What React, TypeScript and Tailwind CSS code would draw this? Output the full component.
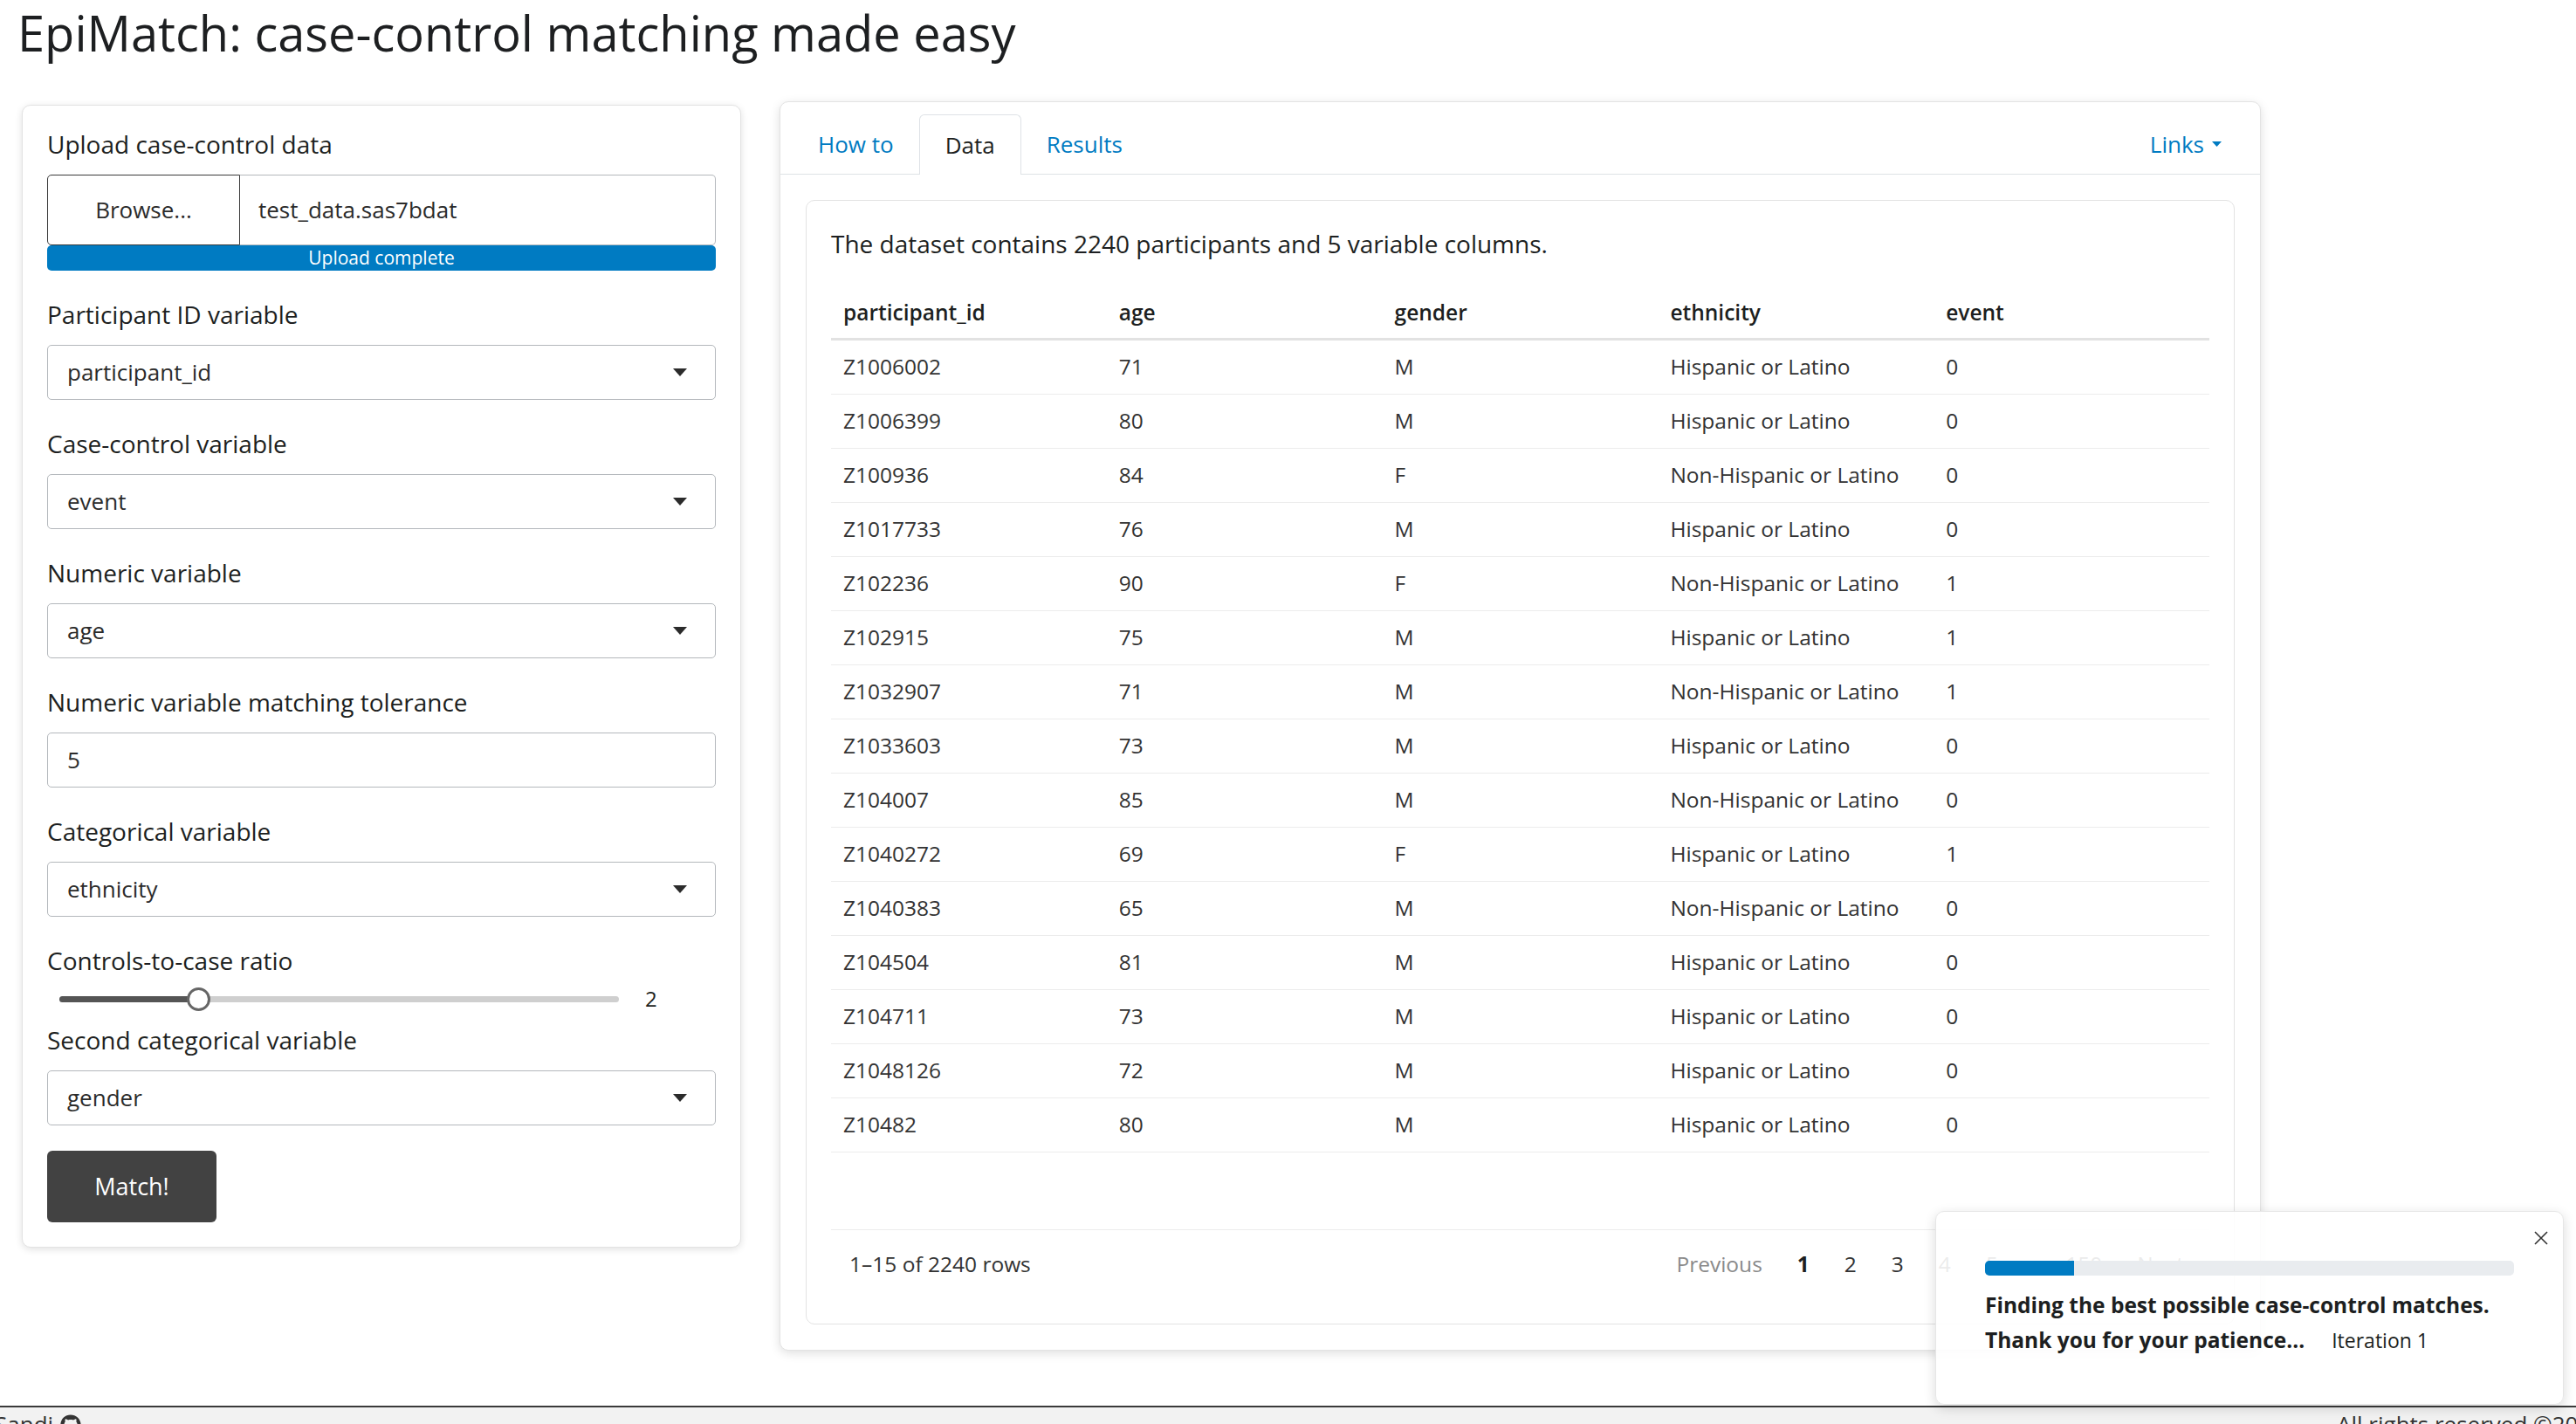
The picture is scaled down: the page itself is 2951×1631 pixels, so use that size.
import { FaGithub } from 'react-icons/fa';

const rows: string[][] = [
  ['Z1006002', '71', 'M', 'Hispanic or Latino', '0'],
  ['Z1006399', '80', 'M', 'Hispanic or Latino', '0'],
  ['Z100936', '84', 'F', 'Non-Hispanic or Latino', '0'],
  ['Z1017733', '76', 'M', 'Hispanic or Latino', '0'],
  ['Z102236', '90', 'F', 'Non-Hispanic or Latino', '1'],
  ['Z102915', '75', 'M', 'Hispanic or Latino', '1'],
  ['Z1032907', '71', 'M', 'Non-Hispanic or Latino', '1'],
  ['Z1033603', '73', 'M', 'Hispanic or Latino', '0'],
  ['Z104007', '85', 'M', 'Non-Hispanic or Latino', '0'],
  ['Z1040272', '69', 'F', 'Hispanic or Latino', '1'],
  ['Z1040383', '65', 'M', 'Non-Hispanic or Latino', '0'],
  ['Z104504', '81', 'M', 'Hispanic or Latino', '0'],
  ['Z104711', '73', 'M', 'Hispanic or Latino', '0'],
  ['Z1048126', '72', 'M', 'Hispanic or Latino', '0'],
  ['Z10482', '80', 'M', 'Hispanic or Latino', '0'],
];

const columns = ['participant_id', 'age', 'gender', 'ethnicity', 'event'];

function Caret() {
  return (
    <svg width="16" height="9" viewBox="0 0 16 9" className="shrink-0">
      <path d="M0 0 H16 L8 9 Z" fill="#2b2b2b" />
    </svg>
  );
}

function Label({ children }: { children: string }) {
  return <div className="mb-[14px] h-[42px] text-[28px] leading-[42px] text-[#1d1f21]">{children}</div>;
}

function SelectBox({ label, value }: { label: string; value: string }) {
  return (
    <div className="mb-[29px]">
      <Label>{label}</Label>
      <div className="flex h-[63px] items-center justify-between rounded-[5px] border border-[#b4b8bc] bg-white pl-[22px] pr-[32px] text-[26px] text-[#2b2b2b]">
        <span>{value}</span>
        <Caret />
      </div>
    </div>
  );
}

function Sidebar() {
  return (
    <div className="mt-[4px] w-[824px] shrink-0 rounded-[10px] border border-[#e3e3e3] bg-white px-[28px] pb-[28px] pt-[23px] shadow-[0_2px_8px_rgba(0,0,0,0.12)]">
      <Label>Upload case-control data</Label>
      <div className="flex h-[81px] text-[26px] text-[#2b2b2b]">
        <div className="flex w-[221px] shrink-0 items-center justify-center rounded-l-[5px] border border-[#3a3a3a] bg-white">
          Browse...
        </div>
        <div className="flex flex-1 items-center rounded-r-[5px] border border-l-0 border-[#b4b8bc] pl-[21px]">
          test_data.sas7bdat
        </div>
      </div>
      <div className="mb-[29px] flex h-[29px] items-center justify-center rounded-[5px] bg-[#007bc2] text-[21px] text-white">
        Upload complete
      </div>
      <SelectBox label="Participant ID variable" value="participant_id" />
      <SelectBox label="Case-control variable" value="event" />
      <SelectBox label="Numeric variable" value="age" />
      <div className="mb-[29px]">
        <Label>Numeric variable matching tolerance</Label>
        <div className="flex h-[63px] items-center rounded-[5px] border border-[#b4b8bc] pl-[22px] text-[26px] text-[#2b2b2b]">
          5
        </div>
      </div>
      <SelectBox label="Categorical variable" value="ethnicity" />
      <div className="h-[42px] text-[28px] leading-[42px] text-[#1d1f21]">Controls-to-case ratio</div>
      <div className="flex h-[49px] items-start">
        <div className="relative ml-[14px] mt-[20px] h-[7px] w-[641px] rounded-full bg-[#cfcfcf]">
          <div className="absolute left-0 top-0 h-[7px] w-[160px] rounded-full bg-[#555555]" />
          <div className="absolute left-[146px] top-[-10px] h-[27px] w-[27px] rounded-full border-[3px] border-[#666666] bg-white" />
        </div>
        <div className="ml-[30px] mt-[5px] text-[24px] leading-[36px] text-[#1d1f21]">2</div>
      </div>
      <SelectBox label="Second categorical variable" value="gender" />
      <div className="flex h-[82px] w-[194px] items-center justify-center rounded-[6px] bg-[#424242] text-[27px] text-white">
        Match!
      </div>
    </div>
  );
}

function DataTable() {
  return (
    <div className="text-[24.5px] text-[#333333]">
      <div className="grid h-[61px] grid-cols-5 items-center border-b-[3px] border-[#e2e2e2] font-semibold text-[#1d1f21]">
        {columns.map((c) => (
          <div key={c} className="px-[14px]">
            {c}
          </div>
        ))}
      </div>
      {rows.map((r) => (
        <div key={r[0]} className="grid h-[62px] grid-cols-5 items-center border-b border-[#ececec]">
          {r.map((cell, i) => (
            <div key={i} className="whitespace-nowrap px-[14px]">
              {cell}
            </div>
          ))}
        </div>
      ))}
      <div className="h-[89px] border-b border-[#ececec]" />
      <div className="flex h-[79px] items-center justify-between pl-[21px] pr-[9px]">
        <span>1–15 of 2240 rows</span>
        <div className="flex items-center">
          <span className="px-[20px] text-[#8a8a8a]">Previous</span>
          <span className="px-[20px] font-bold text-[#1d1f21]">1</span>
          <span className="px-[20px]">2</span>
          <span className="px-[20px]">3</span>
          <span className="px-[20px]">4</span>
          <span className="px-[20px]">5</span>
          <span className="px-[9px]">...</span>
          <span className="px-[20px]">150</span>
          <span className="px-[20px]">Next</span>
        </div>
      </div>
    </div>
  );
}

function MainPanel() {
  return (
    <div className="w-[1697px] shrink-0 rounded-[10px] border border-[#e3e3e3] bg-white shadow-[0_3px_12px_rgba(0,0,0,0.13)]">
      <div className="flex items-end justify-between border-b border-[#dee2e6] px-[14px] pt-[14px]">
        <div className="flex text-[26px]">
          <div className="flex h-[68px] items-center px-[29px] text-[#007bc2]">How to</div>
          <div className="-mb-px flex h-[69px] items-center rounded-t-[6px] border border-b-0 border-[#dee2e6] bg-white px-[29px] text-[#1d1f21]">
            Data
          </div>
          <div className="flex h-[68px] items-center px-[29px] text-[#007bc2]">Results</div>
        </div>
        <div className="flex h-[68px] items-center gap-[9px] pr-[30px] text-[26px] text-[#007bc2]">
          Links
          <svg width="11" height="6" viewBox="0 0 11 6">
            <path d="M0 0 H11 L5.5 6 Z" fill="#007bc2" />
          </svg>
        </div>
      </div>
      <div className="p-[29px]">
        <div className="rounded-[10px] border border-[#e3e3e3] px-[28px] pb-[28px] pt-[28px]">
          <p className="mb-[29px] text-[28px] leading-[42px] text-[#1d1f21]">
            The dataset contains 2240 participants and 5 variable columns.
          </p>
          <DataTable />
        </div>
      </div>
    </div>
  );
}

function Toast() {
  return (
    <div className="absolute bottom-[22px] right-[14px] h-[222px] w-[720px] rounded-[10px] border border-[#e6e6e6] bg-white/90 px-[56px] pt-[56px] shadow-[0_4px_14px_rgba(0,0,0,0.15)]">
      <svg className="absolute right-[16px] top-[21px]" width="18" height="18" viewBox="0 0 18 18">
        <path d="M2 2 L16 16 M16 2 L2 16" stroke="#333333" strokeWidth="1.6" />
      </svg>
      <div className="h-[17px] w-full overflow-hidden rounded-[5px] bg-[#e9ecef]">
        <div className="h-full w-[102px] bg-[#007bc2]" />
      </div>
      <div className="mt-[14px] text-[24.5px] font-bold leading-[40px] text-[#1d1f21]">
        Finding the best possible case-control matches.
      </div>
      <div className="flex items-baseline text-[#1d1f21]">
        <span className="text-[24.5px] font-bold leading-[40px]">Thank you for your patience...</span>
        <span className="ml-[31px] text-[23px]">Iteration 1</span>
      </div>
    </div>
  );
}

export default function App() {
  return (
    <div className="relative flex h-[1631px] w-[2951px] flex-col overflow-hidden bg-white font-['Open_Sans',sans-serif]">
      <div className="h-[1610px] shrink-0">
        <h2 className="mt-[4px] pl-[20px] text-[56px] font-normal leading-[1.2] text-[#1d1f21]">
          EpiMatch: case-control matching made easy
        </h2>
        <div className="mt-[45px] flex items-start gap-[44px] pl-[25px]">
          <Sidebar />
          <MainPanel />
        </div>
      </div>
      <div className="flex flex-1 border-t-2 border-[#3a3a3a] bg-[#f2f2f2] text-[26px] leading-[39px] text-[#333333]">
        <div className="-ml-[6px] flex items-center gap-[8px]">
          <span>Sandi</span>
          <FaGithub className="h-[24px] w-[24px]" />
        </div>
        <span className="ml-auto w-[274px] shrink-0 whitespace-nowrap">All rights reserved ©2024</span>
      </div>
      <Toast />
    </div>
  );
}
